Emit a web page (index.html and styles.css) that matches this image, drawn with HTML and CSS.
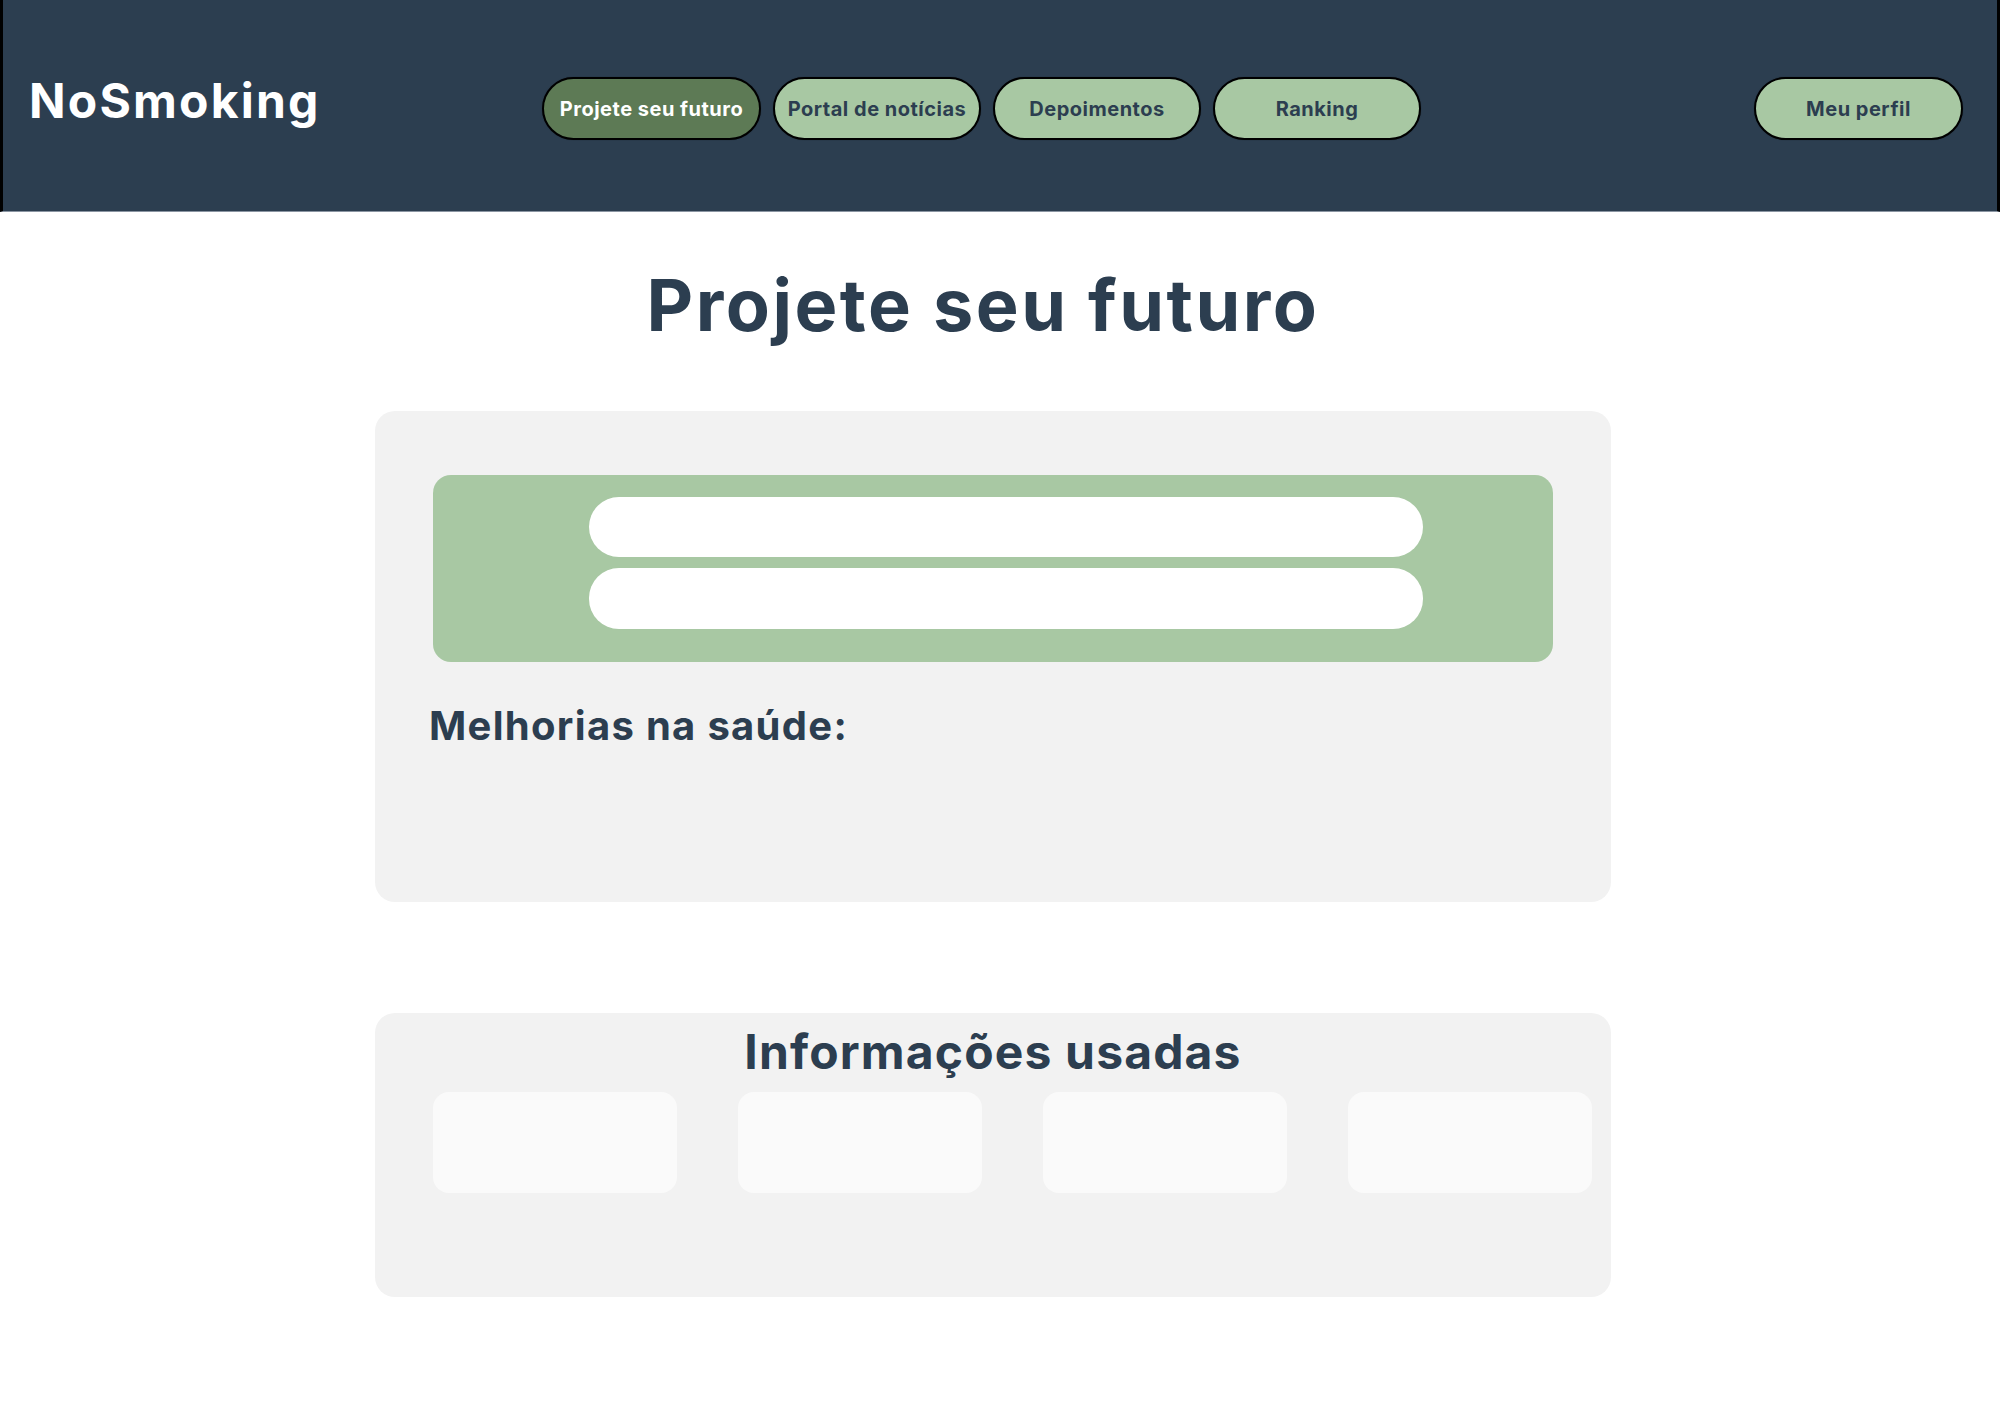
FILE: index.html
```html
<!DOCTYPE html>
<html lang="pt-BR">
<head>
<meta charset="utf-8">
<title>NoSmoking - Projete seu futuro</title>
<link rel="stylesheet" href="styles.css">
</head>
<body>
<header class="topbar">
  <div class="logo">NoSmoking</div>
  <nav class="nav">
    <a class="nav-btn active" href="#">Projete seu futuro</a>
    <a class="nav-btn" href="#">Portal de notícias</a>
    <a class="nav-btn" href="#">Depoimentos</a>
    <a class="nav-btn" href="#">Ranking</a>
  </nav>
  <a class="nav-btn profile" href="#">Meu perfil</a>
</header>
<main class="main">
  <h1 class="page-title">Projete seu futuro</h1>
  <section class="card card-future">
    <form class="green-box">
      <input class="pill-input" type="text">
      <input class="pill-input" type="text">
    </form>
    <h2 class="section-title">Melhorias na saúde:</h2>
  </section>
  <section class="card card-info">
    <h2 class="info-title">Informações usadas</h2>
    <div class="info-row">
      <div class="info-box"></div>
      <div class="info-box"></div>
      <div class="info-box"></div>
      <div class="info-box"></div>
    </div>
  </section>
</main>
</body>
</html>
```
FILE: styles.css
```css
* { box-sizing: border-box; }
body {
  margin: 0;
  font-family: Inter, "Open Sans", sans-serif;
  background: #ffffff;
  color: #2c3e50;
}
.topbar {
  height: 212px;
  background: #2c3e50;
  border-left: 3px solid #000;
  border-right: 3px solid #000;
  border-bottom: 1px solid #8a95a2;
  display: flex;
  align-items: flex-start;
  padding: 77px 34px 0 26px;
}
.logo {
  width: 513px;
  margin-top: 0;
  font-size: 48px;
  line-height: 1;
  font-weight: 700;
  color: #ffffff;
  letter-spacing: 2.2px;
}
.nav {
  display: flex;
  gap: 12px;
}
.nav-btn {
  display: flex;
  align-items: center;
  justify-content: center;
  width: 208px;
  height: 63px;
  border: 2px solid #000;
  border-radius: 32px;
  background: #a8c8a3;
  color: #2c3e50;
  font-size: 20px;
  font-weight: 700;
  letter-spacing: 0.5px;
  text-decoration: none;
  box-shadow: 0 0 1px rgba(0,0,0,0.5);
  white-space: nowrap;
}
.nav-btn.active {
  width: 219px;
  background: #5d7a55;
  color: #ffffff;
}
.nav-btn.profile {
  width: 209px;
  margin-left: auto;
}
.main {
  width: 1236px;
  margin-left: 375px;
  padding-bottom: 110px;
}
.page-title {
  margin: 50px 0 63px;
  padding-right: 20px;
  text-align: center;
  font-size: 72px;
  line-height: 1.2;
  font-weight: 700;
  letter-spacing: 2.5px;
  color: #2c3e50;
}
.card {
  background: #f2f2f2;
  border-radius: 20px;
}
.card-future {
  padding: 64px 58px 152px;
}
.green-box {
  margin: 0;
  background: #a8c8a3;
  border-radius: 18px;
  padding: 22px 0 33px 156px;
  display: flex;
  flex-direction: column;
  gap: 11px;
}
.pill-input {
  width: 834px;
  height: 60px;
  border: none;
  border-radius: 30px;
  background: #ffffff;
  outline: none;
}
.pill-input + .pill-input { height: 61px; }
.section-title {
  margin: 40px 0 0 -4px;
  font-size: 40px;
  line-height: 1.2;
  font-weight: 700;
  letter-spacing: 1.3px;
  color: #2c3e50;
}
.card-info {
  margin-top: 111px;
  padding: 10px 0 104px 58px;
}
.info-title {
  margin: 0 0 11px;
  padding-right: 58px;
  text-align: center;
  font-size: 48px;
  line-height: 1.2;
  font-weight: 700;
  letter-spacing: 1.15px;
  color: #2c3e50;
}
.info-row {
  display: flex;
  gap: 61px;
}
.info-box {
  flex: 0 0 244px;
  height: 101px;
  background: #fafafa;
  border-radius: 16px;
}
```
